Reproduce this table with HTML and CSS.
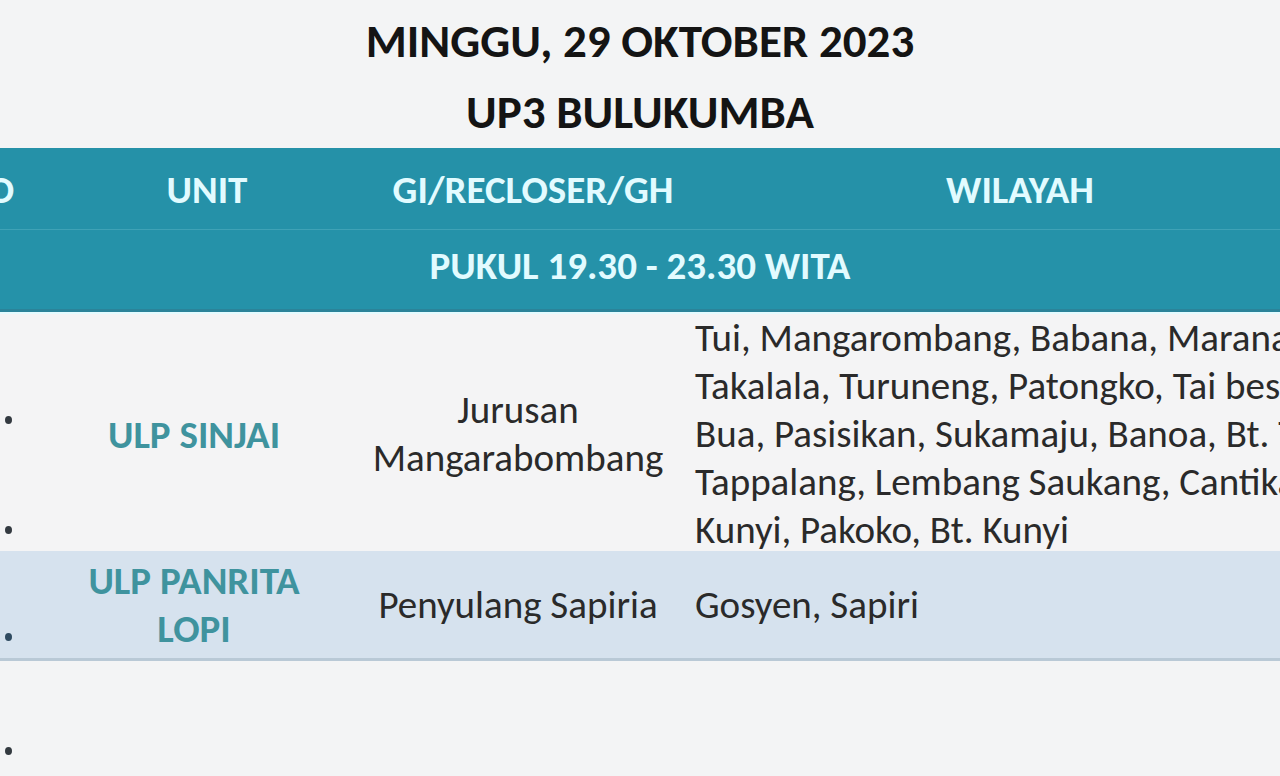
FILE: index.html
```html
<!DOCTYPE html>
<html lang="id">
<head>
<meta charset="utf-8">
<title>Jadwal Pemadaman UP3 Bulukumba</title>
<link rel="stylesheet" href="styles.css">
</head>
<body>
<div class="page">
  <header class="titles">
    <h1 class="title">MINGGU, 29 OKTOBER 2023</h1>
    <h2 class="subtitle">UP3 BULUKUMBA</h2>
  </header>
  <div class="table">
    <div class="head-row">
      <div class="hc hc-no">NO</div>
      <div class="hc">UNIT</div>
      <div class="hc hc-gi">GI/RECLOSER/GH</div>
      <div class="hc">WILAYAH</div>
    </div>
    <div class="time-row">PUKUL 19.30 - 23.30 WITA</div>
    <div class="row row-a">
      <div class="cell no no-a"><span class="dot"></span><span class="dot"></span></div>
      <div class="cell unit">ULP SINJAI</div>
      <div class="cell gi">Jurusan<br>Mangarabombang</div>
      <div class="cell area">Tui, Mangarombang, Babana, Maranang,<br>Takalala, Turuneng, Patongko, Tai besi,<br>Bua, Pasisikan, Sukamaju, Banoa, Bt. Tui,<br>Tappalang, Lembang Saukang, Cantikang,<br>Kunyi, Pakoko, Bt. Kunyi</div>
    </div>
    <div class="row row-b">
      <div class="cell no no-b"><span class="dot"></span></div>
      <div class="cell unit">ULP PANRITA<br>LOPI</div>
      <div class="cell gi">Penyulang Sapiria</div>
      <div class="cell area">Gosyen, Sapiri</div>
    </div>
    <div class="row row-c">
      <div class="cell no no-c"><span class="dot"></span></div>
      <div class="cell unit"></div>
      <div class="cell gi"></div>
      <div class="cell area"></div>
    </div>
  </div>
</div>
</body>
</html>
```

FILE: styles.css
```css
* { box-sizing: border-box; }
html, body {
  margin: 0;
  padding: 0;
  background: #f3f4f5;
}
body {
  width: 1280px;
  height: 776px;
  overflow: hidden;
  font-family: "Carlito", "Lato", "Liberation Sans", sans-serif;
}
.page {
  width: 1280px;
  height: 776px;
  overflow: hidden;
}
.titles {
  text-align: center;
  color: #141414;
  padding-top: 13px;
  height: 148px;
}
.title, .subtitle {
  margin: 0;
  font-weight: 700;
  font-size: 47px;
  line-height: 56px;
}
.subtitle {
  margin-top: 15px;
}
.table {
  margin-left: -46px;
  width: 1410px;
}
.head-row, .row {
  display: grid;
  grid-template-columns: 100px 306px 316px 688px;
}
.head-row {
  background: #2591a8;
  height: 82px;
  border-bottom: 1px solid #3fa2b6;
}
.hc {
  color: #e2fbff;
  font-weight: 700;
  font-size: 39px;
  display: flex;
  align-items: center;
  justify-content: center;
  padding-top: 2px;
}
.hc-no { padding-right: 32px; }
.hc-gi { padding-left: 30px; }
.time-row {
  background: #2592a9;
  height: 84px;
  color: #e2fbff;
  font-weight: 700;
  font-size: 39px;
  display: flex;
  align-items: center;
  justify-content: center;
  padding-right: 38px;
  padding-bottom: 12px;
  border-bottom: 2px solid #e4fbff;
  box-shadow: 0 -3px 0 #2b8399 inset;
}
.row-a {
  height: 237px;
  background: #f4f4f5;
}
.row-b {
  height: 110px;
  background: #d6e2ee;
  border-bottom: 3px solid #b9c9d6;
}
.row-c {
  height: 120px;
  background: #f3f4f5;
}
.cell {
  font-size: 39px;
  line-height: 48px;
  color: #2a2a2a;
}
.unit {
  display: flex;
  align-items: center;
  justify-content: center;
  text-align: center;
  font-weight: 700;
  color: #3f939e;
  font-size: 39px;
  line-height: 48px;
  padding-right: 26px;
}
.row-a .unit { padding-top: 2px; }
.gi {
  display: flex;
  align-items: center;
  justify-content: center;
  text-align: center;
}
.area {
  padding-left: 19px;
  white-space: nowrap;
  display: flex;
  align-items: center;
}
.row-a .area {
  align-items: flex-start;
}
.no {
  display: flex;
  flex-direction: column;
  align-items: flex-start;
  padding-left: 51px;
}
.dot {
  display: block;
  width: 7px;
  height: 8px;
  border-radius: 50%;
  background: #333a40;
}
.no-a { padding-top: 102px; gap: 102px; }
.no-b { justify-content: flex-end; padding-bottom: 17px; }
.no-b .dot { background: #2f4a60; }
.no-c { padding-top: 86px; }
```
